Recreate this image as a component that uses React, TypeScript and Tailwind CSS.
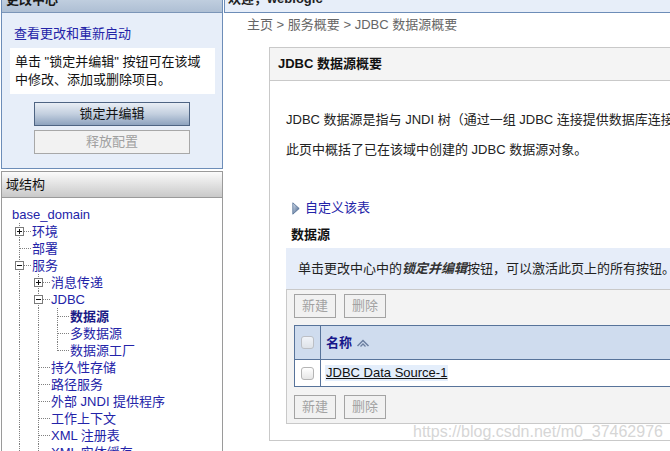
import React from "react";

type Row = {
  label: string;
  depth: number;
  guides: boolean[];
  box?: "+" | "-";
  bold?: boolean;
  last?: boolean;
};

const rows: Row[] = [
  { label: "环境", depth: 1, guides: [], box: "+" },
  { label: "部署", depth: 1, guides: [] },
  { label: "服务", depth: 1, guides: [], box: "-" },
  { label: "消息传递", depth: 2, guides: [true], box: "+" },
  { label: "JDBC", depth: 2, guides: [true], box: "-" },
  { label: "数据源", depth: 3, guides: [true, true], bold: true },
  { label: "多数据源", depth: 3, guides: [true, true] },
  { label: "数据源工厂", depth: 3, guides: [true, true], last: true },
  { label: "持久性存储", depth: 2, guides: [true] },
  { label: "路径服务", depth: 2, guides: [true] },
  { label: "外部 JNDI 提供程序", depth: 2, guides: [true] },
  { label: "工作上下文", depth: 2, guides: [true] },
  { label: "XML 注册表", depth: 2, guides: [true] },
  { label: "XML 实体缓存", depth: 2, guides: [true] },
];

function ExpBox({ kind }: { kind: "+" | "-" }) {
  return (
    <span className="absolute left-[5px] top-[4px] w-[9px] h-[9px] border border-[#7a7a7a] bg-white">
      <span className="absolute left-[1px] top-[3px] w-[5px] h-[1px] bg-[#111]" />
      {kind === "+" && <span className="absolute left-[3px] top-[1px] w-[1px] h-[5px] bg-[#111]" />}
    </span>
  );
}

function TreeRow({ row }: { row: Row }) {
  return (
    <div className="flex h-[17px] items-center">
      {row.guides.map((g, i) => (
        <span key={i} className="relative w-[19px] h-full shrink-0">
          {g && <span className="absolute left-[9px] top-0 h-full border-l border-dotted border-[#808080]" />}
        </span>
      ))}
      <span className="relative w-[21px] h-full shrink-0">
        <span
          className={
            row.last
              ? "absolute left-[9px] top-0 h-[9px] border-l border-dotted border-[#808080]"
              : "absolute left-[9px] top-0 h-full border-l border-dotted border-[#808080]"
          }
        />
        <span className="absolute left-[10px] top-[8px] w-[11px] border-t border-dotted border-[#808080]" />
        {row.box && <ExpBox kind={row.box} />}
      </span>
      <span
        className={
          row.bold
            ? "ml-[1px] whitespace-nowrap font-bold text-[#1a1a86]"
            : "ml-[1px] whitespace-nowrap text-[#2323a8]"
        }
      >
        {row.label}
      </span>
    </div>
  );
}

function GrayBtn({ label }: { label: string }) {
  return (
    <div className="w-[42px] h-[24px] border border-[#a3a3a3] bg-[#f1f1f1] text-[#a2a2a2] flex items-center justify-center">
      {label}
    </div>
  );
}

function CheckBox() {
  return (
    <div className="w-[13px] h-[13px] rounded-[3px] border border-[#b4b4b4] bg-gradient-to-b from-white to-[#e6e6e6]" />
  );
}

export default function App() {
  return (
    <div className="relative w-[670px] h-[451px] overflow-hidden bg-white flex font-['Liberation_Sans','Noto_Sans_CJK_SC',sans-serif] text-[13px] leading-[18px] text-[#222]">
      {/* Left column */}
      <div className="w-[223px] shrink-0 flex flex-col pl-[1px]">
        {/* Change center */}
        <div className="-mt-[14px] w-[222px] border border-[#6d8db8] bg-[#e7eef9] flex flex-col">
          <div className="h-[26px] border-b border-[#7b95b8] bg-gradient-to-b from-[#d3deea] to-[#aebfd4] flex items-center pl-[4px] font-bold text-[#1a1a1a]">
            更改中心
          </div>
          <div className="pt-[12px] pl-[12px] text-[#2323a8]">查看更改和重新启动</div>
          <div className="mt-[5px] ml-[8px] mr-[7px] bg-white pt-[5px] pb-[5px] pl-[5px] text-[#111]">
            单击 "锁定并编辑" 按钮可在该域
            <br />
            中修改、添加或删除项目。
          </div>
          <div className="mt-[8px] ml-[32px] w-[156px] h-[24px] border border-[#4e6483] bg-gradient-to-b from-[#e9eef5] via-[#c3cfdf] to-[#8ea3bf] flex items-center justify-center text-[#111]">
            锁定并编辑
          </div>
          <div className="mt-[4px] mb-[14px] ml-[32px] w-[156px] h-[24px] border border-[#a8a8a8] bg-[#f2f2f2] flex items-center justify-center text-[#a0a0a0]">
            释放配置
          </div>
        </div>
        {/* Domain structure */}
        <div className="mt-[2px] w-[222px] flex-1 border border-[#9a9a9a] bg-white flex flex-col">
          <div className="h-[26px] border-b border-[#9a9a9a] bg-gradient-to-b from-[#fbfbfb] to-[#c9c9c9] flex items-center pl-[4px] text-[#111]">
            域结构
          </div>
          <div className="pt-[8px] pl-[8px]">
            <div className="h-[17px] flex items-center ml-[2px] text-[#2323a8]">base_domain</div>
            {rows.map((r, i) => (
              <TreeRow key={i} row={r} />
            ))}
          </div>
        </div>
      </div>

      {/* Right column */}
      <div className="flex-1 min-w-0 flex flex-col">
        <div className="-mt-[14px] ml-[1px] h-[27px] border-l border-b border-[#6d8db8] bg-[#e7eef9] flex items-center pl-[3px] font-bold text-[#222] whitespace-nowrap">
          欢迎，weblogic
        </div>
        <div className="mt-[3px] pl-[24px] text-[#666] whitespace-nowrap">
          主页 &gt; 服务概要 &gt; JDBC 数据源概要
        </div>
        <div className="mt-[13px] ml-[46px] w-[460px] shrink-0 border border-[#c9c9c9] flex flex-col">
          <div className="h-[33px] border-b border-[#c9c9c9] bg-[#f4f4f4] flex items-center pl-[8px] font-bold text-[#111] whitespace-nowrap">
            JDBC 数据源概要
          </div>
          <div className="pl-[16px] pt-[30px] pb-[16px] flex flex-col">
            <div className="whitespace-nowrap text-[#222]">
              JDBC 数据源是指与 JNDI 树（通过一组 JDBC 连接提供数据库连接性的对象）绑定的对象。
            </div>
            <div className="mt-[12px] whitespace-nowrap text-[#222]">
              此页中概括了已在该域中创建的 JDBC 数据源对象。
            </div>
            <div className="mt-[40px] ml-[6px] flex items-center gap-[5px]">
              <svg width="8" height="13" viewBox="0 0 8 13">
                <defs>
                  <linearGradient id="tri" x1="0" y1="0" x2="1" y2="1">
                    <stop offset="0" stopColor="#dbe4f0" />
                    <stop offset="1" stopColor="#3d5b86" />
                  </linearGradient>
                </defs>
                <polygon points="0.8,0.8 7.2,6.5 0.8,12.2" fill="url(#tri)" stroke="#4d6a92" strokeWidth="0.8" />
              </svg>
              <span className="text-[#2323a8]">自定义该表</span>
            </div>
            <div className="mt-[9px] ml-[5px] font-bold text-[#111]">数据源</div>
            <div className="mt-[4px] h-[41px] bg-[#e6edf9] flex items-center pl-[12px] whitespace-nowrap text-[#222]">
              单击更改中心中的
              <i className="font-bold text-[#333]">锁定并编辑</i>
              按钮，可以激活此页上的所有按钮。
            </div>
            <div className="border-t border-l border-b border-[#c9c9c9] bg-[#f3f3f3] pt-[4px] pb-[4px] pl-[7px] flex flex-col">
              <div className="flex gap-[8px]">
                <GrayBtn label="新建" />
                <GrayBtn label="删除" />
              </div>
              <div className="mt-[7px] border border-[#57739a] bg-white flex flex-col">
                <div className="h-[34px] border-b border-[#57739a] bg-[#cfdcee] flex">
                  <div className="w-[26px] border-r border-[#57739a] flex items-center justify-center">
                    <div className="opacity-70">
                      <CheckBox />
                    </div>
                  </div>
                  <div className="flex items-center pl-[5px] gap-[4px] font-bold text-[#17178a]">
                    名称
                    <svg width="14" height="10" viewBox="0 0 14 10">
                      <path d="M1.5 8 L7 2.5 L12.5 8" fill="none" stroke="#6c7fa0" strokeWidth="1.5" />
                      <path d="M4.5 8.5 L7 6 L9.5 8.5" fill="none" stroke="#6c7fa0" strokeWidth="1.3" />
                    </svg>
                  </div>
                </div>
                <div className="h-[26px] flex">
                  <div className="w-[26px] border-r border-[#57739a] flex items-center justify-center">
                    <CheckBox />
                  </div>
                  <div className="flex items-center pl-[4px]">
                    <span className="bg-[#e4eefb] underline text-[#111] leading-[16px] px-[1px]">JDBC Data Source-1</span>
                  </div>
                </div>
              </div>
              <div className="mt-[8px] flex gap-[8px]">
                <GrayBtn label="新建" />
                <GrayBtn label="删除" />
              </div>
            </div>
          </div>
        </div>
      </div>

      <div className="absolute left-[413px] top-[422px] text-[16px] leading-[20px] text-[#d6d6d6] font-['Liberation_Sans',sans-serif] whitespace-nowrap">
        https://blog.csdn.net/m0_37462976
      </div>
    </div>
  );
}
